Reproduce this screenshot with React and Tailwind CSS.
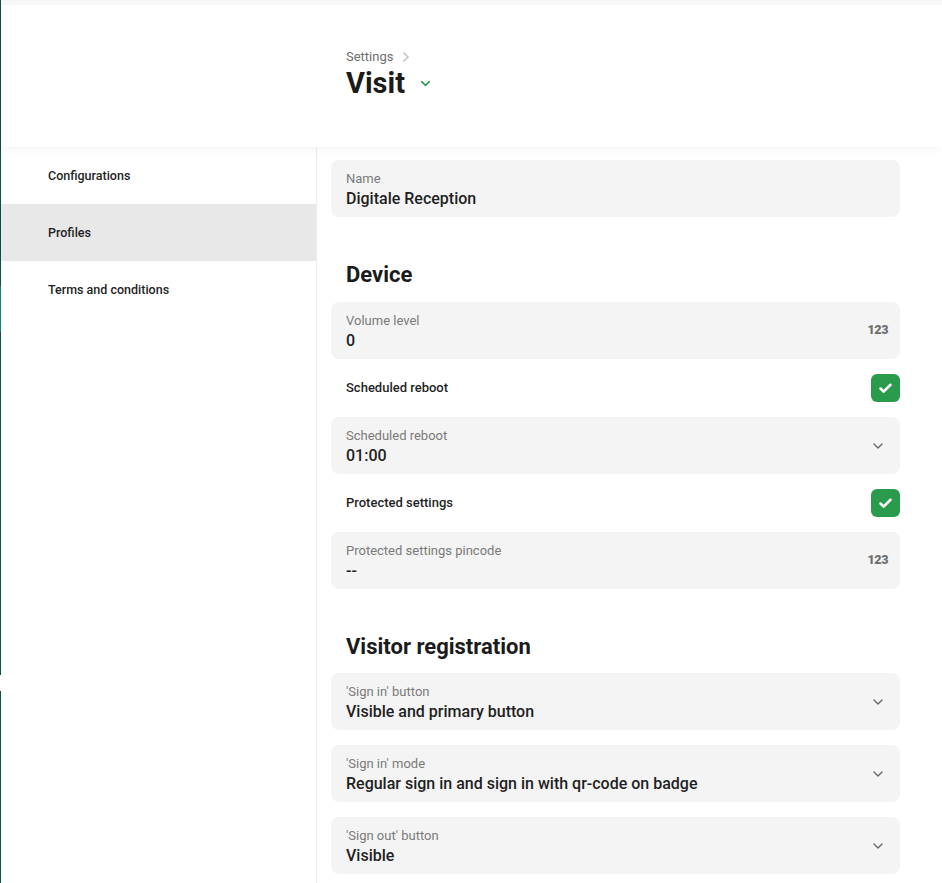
import { ChevronDown, ChevronRight, Check } from "lucide-react";

const font = { fontFamily: "Roboto, 'Noto Sans', sans-serif" };

function NumIcon() {
  return (
    <span className="text-[12.5px] font-black tracking-[-0.4px] text-[#6f6f6f] leading-none">123</span>
  );
}

function Field({ label, value, icon }) {
  return (
    <div className="flex items-center h-[57px] rounded-lg bg-[#f4f4f4] pl-[15px] pr-[12px]">
      <div className="flex-1 flex flex-col pt-[3px]">
        <span className="text-[13px] leading-[17px] text-[#7a7a7a]">{label}</span>
        <span className="text-[16px] leading-[22px] font-medium text-[#1f1f1f] mt-[1px]">{value}</span>
      </div>
      {icon === "num" && <NumIcon />}
      {icon === "select" && <ChevronDown size={16} strokeWidth={2} className="text-[#666] mr-[2px]" />}
    </div>
  );
}

function CheckRow({ label }) {
  return (
    <div className="flex items-center justify-between pl-[15px] h-[58px]">
      <span className="text-[13px] font-medium text-[#1f1f1f]">{label}</span>
      <span className="w-[29px] h-[28px] rounded-[6px] bg-[#2a9a4c] flex items-center justify-center">
        <Check size={15} strokeWidth={4} className="text-white" />
      </span>
    </div>
  );
}

function Heading({ children }) {
  return <h2 className="pl-[15px] text-[22px] font-bold text-[#1b1b1b] leading-[28px]">{children}</h2>;
}

export default function App() {
  const nav = ["Configurations", "Profiles", "Terms and conditions"];
  return (
    <div className="flex min-h-[883px] bg-white" style={font}>
      <div className="w-[1px] flex flex-col shrink-0">
        <div className="h-[286px] bg-[#0e4b4b]"></div>
        <div className="h-[46px] bg-[#0f8a7a]"></div>
        <div className="h-[343px] bg-[#0e4b4b]"></div>
        <div className="h-[16px] bg-white"></div>
        <div className="flex-1 bg-[#0e4b4b]"></div>
      </div>
      <div className="flex-1 flex flex-col">
        <div className="h-[147px] relative shadow-[0_3px_6px_rgba(0,0,0,0.04)] border-t-[5px] border-[#f7f7f7] flex">
          <div className="w-[345px] shrink-0"></div>
          <div className="pt-[42px]">
            <div className="flex items-center gap-[5px] text-[13px] text-[#6e6e6e]">
              Settings
              <ChevronRight size={16} strokeWidth={2.5} className="text-[#c4c4c4]" />
            </div>
            <div className="flex items-center gap-[13px] mt-[-4px]">
              <span className="text-[29px] font-bold text-[#1b1b1b] leading-[40px]">Visit</span>
              <ChevronDown size={15} strokeWidth={2.5} className="text-[#2a9a4c] mt-[2px]" />
            </div>
          </div>
        </div>
        <div className="flex flex-1">
          <div className="w-[316px] shrink-0 border-r border-[#ececec]">
            {nav.map((n) => (
              <div
                key={n}
                className={
                  "h-[57px] flex items-center pl-[47px] pt-[2px] text-[12.5px] font-medium text-[#1f1f1f] " +
                  (n === "Profiles" ? "bg-[#e8e8e8]" : "")
                }
              >
                {n}
              </div>
            ))}
          </div>
          <div className="w-[583px] pl-[14px] pt-[13px] flex flex-col">
            <Field label="Name" value="Digitale Reception" />
            <div className="pt-[44px] pb-[13px]">
              <Heading>Device</Heading>
            </div>
            <Field label="Volume level" value="0" icon="num" />
            <CheckRow label="Scheduled reboot" />
            <Field label="Scheduled reboot" value="01:00" icon="select" />
            <CheckRow label="Protected settings" />
            <Field label="Protected settings pincode" value="--" icon="num" />
            <div className="pt-[44px] pb-[12px]">
              <Heading>Visitor registration</Heading>
            </div>
            <div className="flex flex-col gap-[15px]">
              <Field label="'Sign in' button" value="Visible and primary button" icon="select" />
              <Field label="'Sign in' mode" value="Regular sign in and sign in with qr-code on badge" icon="select" />
              <Field label="'Sign out' button" value="Visible" icon="select" />
            </div>
          </div>
        </div>
      </div>
    </div>
  );
}
